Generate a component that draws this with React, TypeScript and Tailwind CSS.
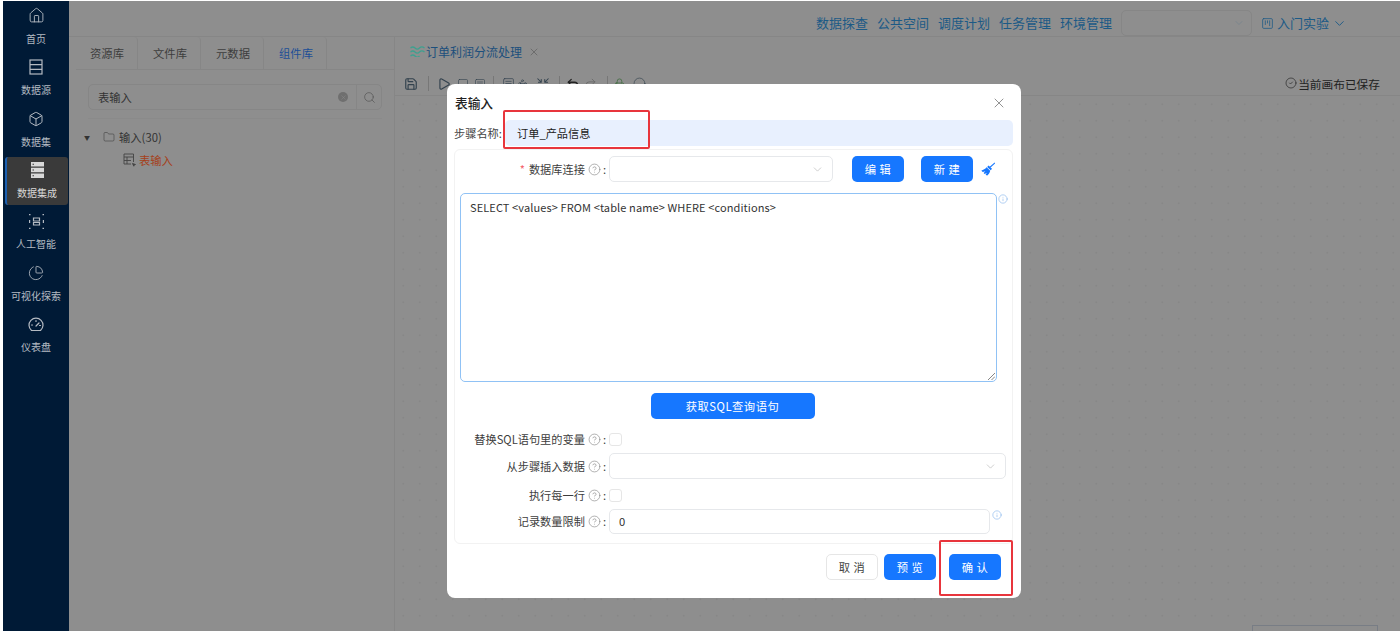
import { CircleCheck, ChevronDown, HelpCircle, House, Info, PieChart, Search, Box, X, Save, Play, Undo2, Redo2, Folder, Square, SquareKanban, Lock, Circle, Shrink, Waypoints, SquareMenu } from "lucide-react";
import { ReactNode } from "react";

const FONT = "font-['Noto_Sans_CJK_SC','Noto_Sans',sans-serif]";

const NAV = [
  { label: "首页", icon: <House size={17} strokeWidth={1.3} /> },
  { label: "数据源", icon: <ServerIcon /> },
  { label: "数据集", icon: <Box size={16} strokeWidth={1.5} /> },
  { label: "数据集成", icon: <StackIcon />, active: true },
  { label: "人工智能", icon: <ScanIcon /> },
  { label: "可视化探索", icon: <PieChart size={16} strokeWidth={1.3} /> },
  { label: "仪表盘", icon: <GaugeIcon /> },
];

function ServerIcon() {
  return (
    <svg width="14" height="16" viewBox="0 0 14 16" fill="none" stroke="currentColor" strokeWidth="1.2">
      <rect x="1" y="1" width="12" height="14" />
      <path d="M1 5.7h12M1 10.3h12" />
    </svg>
  );
}

function StackIcon() {
  return (
    <svg width="13" height="16" viewBox="0 0 13 16" fill="currentColor">
      <path d="M0 0h13v4.5H0zM0 5.7h13v4.5H0zM0 11.4h13V16H0z" />
      <path d="M1.5 1.8h1.5v1H1.5zM1.5 7.5h1.5v1H1.5zM1.5 13.2h1.5v1H1.5z" fill="#3a3a3a" />
    </svg>
  );
}

function ScanIcon() {
  return (
    <svg width="15" height="15" viewBox="0 0 15 15" fill="none" stroke="currentColor" strokeWidth="1.2">
      <path d="M4.5 4h6v3h-6zM4.5 8.5h6v2.5h-6z" />
      <path d="M0 .5h1.5M13.5.5H15M0 14.5h1.5M13.5 14.5H15M.5 6v3M14.5 6v3" strokeWidth="1.4" />
    </svg>
  );
}

function GaugeIcon() {
  return (
    <svg width="16" height="15" viewBox="0 0 16 15" fill="none" stroke="currentColor" strokeWidth="1.2" strokeLinecap="round">
      <path d="M3.5 13.5a7 7 0 1 1 9 0z" />
      <path d="M8 9l3-3M3.5 8h1M11.5 8.5h1M8 3.5v1" />
    </svg>
  );
}

function WaveIcon() {
  return (
    <svg width="15" height="11" viewBox="0 0 15 11" fill="none" stroke="#3fa08f" strokeWidth="1.3">
      <path d="M0.5 2c2-1.6 3-1.6 4.5 0s3 1.6 4.5 0 3-1.6 5 0" />
      <path d="M0.5 6c2-1.6 3-1.6 4.5 0s3 1.6 4.5 0 3-1.6 5 0" />
      <path d="M0.5 10c2-1.6 3-1.6 4.5 0s3 1.6 4.5 0" />
    </svg>
  );
}

function BroomIcon() {
  return (
    <svg width="14" height="14" viewBox="0 0 14 14" fill="#1677ff">
      <path d="M13.6 0.4l0.6 0.8-4.6 4.4-0.9-0.9z" />
      <path d="M7.6 3.6l3.4 3.2-1.3 1.4-3.5-3.3z" />
      <path d="M5.6 5.3l3.6 3.4c-.5 2-1.5 3.6-2.9 4.9-.6-.2-1.2-.5-1.7-.9l1.3-1.9-2.2 1.1c-.4-.3-.8-.6-1.1-1l1.8-1.6-2.6.6C1 9.3.7 8.9.4 8.4 2.4 8 4.2 7 5.6 5.3z" />
    </svg>
  );
}

function TableArrowIcon() {
  return (
    <svg width="14" height="14" viewBox="0 0 14 14" fill="none" stroke="#444" strokeWidth="0.9">
      <path d="M10.5 9V1H1v10h7" />
      <path d="M1 4h9.500M4 4v7M1 7.500h7" />
      <path d="M9.500 10.500l3 1-1.300.4-.4 1.300z" fill="#444" />
    </svg>
  );
}

function Field({ label, required, children }: { label: string; required?: boolean; children: ReactNode }) {
  return (
    <div className="flex items-center">
      <div className="flex h-[18px] w-[149px] shrink-0 items-center justify-end text-[11.2px] text-[#3d3d3d]">
        {required && <span className="mr-1 text-[#f5646c]">*</span>}
        <span>{label}</span>
        <HelpCircle size={13} strokeWidth={1.1} className="ml-[3px] text-[#7d7d7d]" />
        <span className="ml-[2px] mr-[3px]">:</span>
      </div>
      {children}
    </div>
  );
}

function Checkbox() {
  return <div className="h-[13px] w-[13px] rounded-[3px] border border-[#e6e6e6] bg-white" />;
}

function SelectBox({ className }: { className: string }) {
  return (
    <div className={`flex h-[26px] items-center justify-end rounded-[5px] border border-[#e6e8eb] bg-white pr-[8px] ${className}`}>
      <ChevronDown size={13} strokeWidth={1.2} className="text-[#b5b5b5]" />
    </div>
  );
}

function BlueButton({ label, className }: { label: string; className: string }) {
  return (
    <button className={`h-[26px] rounded-[5px] bg-[#1677ff] text-[11.3px] tracking-[0.5px] text-white ${className}`}>{label}</button>
  );
}

function Dialog() {
  return (
    <div className="absolute left-[447px] top-[84px] flex h-[514px] w-[574px] flex-col rounded-[8px] bg-white pl-[7px] pr-[8px]">
      <div className="flex h-[36px] items-center justify-between pl-[1px] pr-[6px] pt-[1px]">
        <span className="text-[12.7px] font-medium text-[#222]">表输入</span>
        <X size={16} strokeWidth={1.2} className="text-[#777]" />
      </div>
      <div className="flex h-[26px] items-center">
        <span className="w-[51px] shrink-0 whitespace-nowrap text-[11.2px] text-[#444]">步骤名称:</span>
        <div className="flex h-[26px] flex-1 items-center rounded-[5px] bg-[#e8f0fe] pl-[12px] text-[11.2px] text-[#222]">订单_产品信息</div>
      </div>
      <div className="mt-[3px] flex h-[395px] flex-col rounded-[6px] border border-[#f2f2f2] pl-[5px] pr-[6px] pt-[6px]">
        <Field label="数据库连接" required>
          <SelectBox className="w-[224px]" />
          <BlueButton label="编 辑" className="ml-[19px] w-[52px]" />
          <BlueButton label="新 建" className="ml-[17px] w-[52px]" />
          <span className="ml-[8px]">
            <BroomIcon />
          </span>
        </Field>
        <div className="mt-[11px] flex items-start">
          <div className="relative h-[189px] w-[537px] shrink-0 rounded-[5px] border-[1.5px] border-[#90c2f5] px-[9px] py-[5px] text-[11px] tracking-[0.11px] text-[#333]">
            {"SELECT <values> FROM <table name> WHERE <conditions>"}
            <svg width="8" height="8" viewBox="0 0 8 8" className="absolute bottom-[1px] right-[1px]" stroke="#666" strokeWidth="0.8">
              <path d="M1 8l7-7M4.500 8l3.500-3.500" />
            </svg>
          </div>
          <Info size={10} strokeWidth={1.4} className="ml-[1px] mt-[1px] shrink-0 text-[#7db0ea]" />
        </div>
        <div className="mt-[11px] flex justify-center pr-[1px]">
          <BlueButton label="获取SQL查询语句" className="w-[164px]" />
        </div>
        <div className="mt-[11px] flex flex-col">
          <Field label="替换SQL语句里的变量">
            <Checkbox />
          </Field>
          <div className="mt-[5px]">
            <Field label="从步骤插入数据">
              <SelectBox className="w-[398px]" />
            </Field>
          </div>
          <div className="mt-[7px]">
            <Field label="执行每一行">
              <Checkbox />
            </Field>
          </div>
          <div className="mt-[5px] flex items-start">
            <Field label="记录数量限制">
              <div className="flex h-[25px] w-[381px] items-center rounded-[5px] border border-[#e6e8eb] pl-[9px] text-[11.2px] text-[#333]">0</div>
            </Field>
            <Info size={10} strokeWidth={1.4} className="ml-[2px] mt-[1px] text-[#7db0ea]" />
          </div>
        </div>
      </div>
      <div className="mt-[10px] flex justify-end gap-[6px] pr-[12px]">
        <button className="h-[26px] w-[52px] rounded-[5px] border border-[#e6e6e6] bg-white text-[11.3px] tracking-[0.5px] text-[#444]">取 消</button>
        <BlueButton label="预 览" className="w-[52px]" />
        <BlueButton label="确 认" className="ml-[7px] w-[52px]" />
      </div>
    </div>
  );
}

export default function App() {
  return (
    <div className={`relative h-[631px] w-[1400px] overflow-hidden bg-white pl-[3px] pt-[1px] ${FONT}`}>
      <div className="flex h-full">
        <aside className="flex w-[66px] shrink-0 flex-col items-center bg-[#001a36] pt-[1px] text-[#b4bac2]">
          {NAV.map((n) => (
            <div key={n.label} className={`mb-[3.5px] flex h-[48px] w-[63px] flex-col items-center justify-center gap-[8px] rounded-[3px] text-[10px] ${n.active ? "border-l-2 border-[#1c5fb0] bg-[#3a3a3a] text-[#d8d8d8]" : ""}`}>
              {n.icon}
              <span className="leading-[13px]">{n.label}</span>
            </div>
          ))}
        </aside>
        <div className="flex min-w-0 flex-1 flex-col bg-[#8e8e8e]">
          <header className="flex h-[36px] items-start justify-end gap-[9px] border-b border-[#868686] pr-[53px] pt-[9px] text-[13px] leading-[26px] text-[#1c5a86]">
            <span>数据探查</span>
            <span>公共空间</span>
            <span>调度计划</span>
            <span>任务管理</span>
            <span>环境管理</span>
            <div className="flex h-[26px] w-[131px] items-center justify-end rounded-[5px] border border-[#868686] pr-[6px]">
              <ChevronDown size={12} strokeWidth={1.2} className="text-[#6f7f8c]" />
            </div>
            <span className="flex h-[26px] items-center gap-[3px] text-[#1c5a86]">
              <SquareKanban size={13} strokeWidth={1.4} />
              入门实验
              <ChevronDown size={15} strokeWidth={1.5} />
            </span>
          </header>
          <div className="flex flex-1">
            <section className="w-[326px] shrink-0 border-r border-[#868686] pl-[7px]">
              <div className="flex h-[33px] items-end gap-[1px] border-b border-[#868686] text-[11.3px] text-[#3d3d3d]">
                <div className="flex h-[32px] w-[62px] items-center justify-center rounded-t-[4px] border-r border-[#868686] pl-[1px]">资源库</div>
                <div className="flex h-[32px] w-[62px] items-center justify-center rounded-t-[4px] border-r border-[#868686] pl-[1px]">文件库</div>
                <div className="flex h-[32px] w-[62px] items-center justify-center rounded-t-[4px] border-r border-[#868686] pl-[1px]">元数据</div>
                <div className="flex h-[32px] w-[62px] items-center justify-center rounded-t-[4px] border-r border-[#868686] pl-[1px] text-[#1c4f96]">组件库</div>
              </div>
              <div className="ml-[12px] mt-[14px] flex h-[26px] w-[294px] items-center rounded-[5px] border border-[#868686] text-[11.3px] text-[#333]">
                <span className="flex-1 pl-[9px]">表输入</span>
                <span className="mr-[8px] flex h-[10px] w-[10px] items-center justify-center rounded-full bg-[#6f6f6f]">
                  <X size={7} strokeWidth={1.5} className="text-[#8e8e8e]" />
                </span>
                <span className="flex h-full w-[25px] items-center justify-center border-l border-[#868686]">
                  <Search size={13} strokeWidth={1.3} className="text-[#555]" />
                </span>
              </div>
              <div className="ml-[12px] mt-[8px] w-[294px] border-t border-[#8a8a8a]" />
              <div className="ml-[8px] mt-[8px] flex h-[20px] items-center text-[11.3px] text-[#333]">
                <span className="mr-[13px] text-[6px]">▼</span>
                <Folder size={12} strokeWidth={1} className="mr-[4px]" />
                输入(30)
              </div>
              <div className="ml-[47px] mt-[3px] flex h-[20px] items-center text-[11.3px] text-[#a5401a]">
                <TableArrowIcon />
                <span className="ml-[2px]">表输入</span>
              </div>
            </section>
            <section className="flex min-w-0 flex-1 flex-col">
              <div className="flex h-[29px] items-center pl-[15px] text-[12px] text-[#1c4f7c]">
                <WaveIcon />
                <span className="ml-[1px]">订单利润分流处理</span>
                <X size={12} strokeWidth={1.2} className="ml-[6px] text-[#555]" />
              </div>
              <div className="flex h-[30px] items-center border-b border-[#868686] pl-[9px] pr-[20px] pt-[6px] text-[#33424e]">
                <Save size={14} strokeWidth={2} />
                <span className="ml-[10px] h-[15px] w-px bg-[#777]" />
                <Play size={14} strokeWidth={2} className="ml-[8px]" />
                <Square size={12} strokeWidth={1.2} className="ml-[6px]" />
                <SquareMenu size={12} strokeWidth={1.2} className="ml-[5px]" />
                <span className="ml-[7px] h-[15px] w-px bg-[#777]" />
                <SquareMenu size={13} strokeWidth={1.3} className="ml-[8px]" />
                <Waypoints size={9} strokeWidth={1.5} className="ml-[3px]" />
                <Shrink size={14} strokeWidth={1.8} className="ml-[9px]" />
                <span className="ml-[9px] h-[15px] w-px bg-[#777]" />
                <Undo2 size={14} strokeWidth={2.2} className="ml-[6px] text-[#222]" />
                <Redo2 size={13} strokeWidth={1.5} className="ml-[4px] text-[#666]" />
                <span className="ml-[10px] h-[15px] w-px bg-[#777]" />
                <Lock size={11} strokeWidth={1.6} className="ml-[6px] text-[#3d6b3d]" />
                <Circle size={13} strokeWidth={1.2} className="ml-[8px]" />
                <span className="flex-1" />
                <span className="flex items-center gap-[1px] text-[11.7px] text-[#222]">
                  <CircleCheck size={12} strokeWidth={1.3} />
                  当前画布已保存
                </span>
              </div>
              <div className="relative flex-1 bg-[radial-gradient(circle,#838383_0.9px,transparent_1px)] bg-[length:16.5px_16.5px]">
                <div className="absolute bottom-[-4px] right-[22px] h-[10px] w-[126px] border-x border-t border-[#787d85]" />
              </div>
            </section>
          </div>
        </div>
      </div>
      <Dialog />
      <div className="absolute left-[503px] top-[110px] h-[39px] w-[147px] rounded-[2px] border-2 border-[#e8353c]" />
      <div className="absolute left-[939px] top-[540px] h-[56px] w-[74px] rounded-[2px] border-2 border-[#e8353c]" />
    </div>
  );
}
